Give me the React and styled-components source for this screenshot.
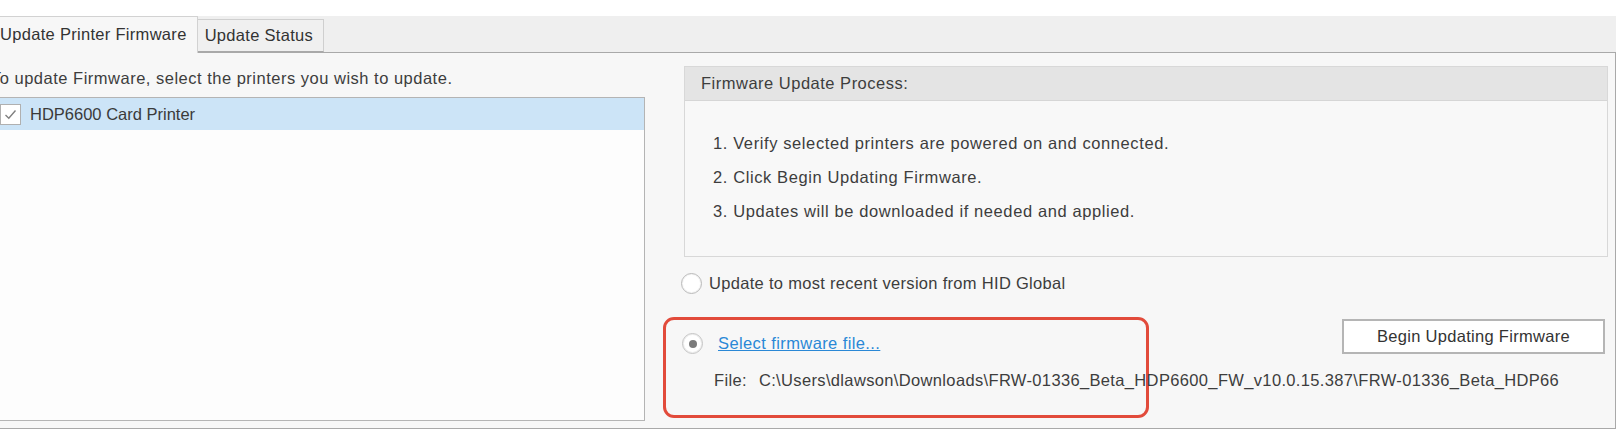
import React from 'react';
import styled, { createGlobalStyle } from 'styled-components';

const GlobalStyle = createGlobalStyle`
  html, body {
    margin: 0;
    padding: 0;
    background: #ffffff;
  }
  body {
    font-family: 'Liberation Sans', Arial, sans-serif;
  }
`;

const Root = styled.div`
  width: 1617px;
  height: 429px;
  overflow: hidden;
  display: flex;
  background: #ffffff;
`;

const Window = styled.div`
  flex: 0 0 1638px;
  margin-left: -22px;
  display: flex;
  flex-direction: column;
  padding-right: 1px;
  border-right: 2px solid #2b6fc6;
  background: #ffffff;
  font-size: 16.5px;
  letter-spacing: 0.4px;
  color: #3d3d3d;
`;

const TopGap = styled.div`
  height: 16px;
  background: #ffffff;
`;

const TabBar = styled.div`
  height: 36px;
  background: #efefef;
  display: flex;
  align-items: flex-end;
  padding-left: 14px;
  position: relative;
  z-index: 1;
`;

const Tab = styled.div`
  box-sizing: border-box;
  height: ${(p) => (p.$active ? '37px' : '33px')};
  margin-bottom: ${(p) => (p.$active ? '-1px' : '0')};
  padding: 0 ${(p) => (p.$active ? '10px 2px 7px' : '10px 0 7px')};
  display: flex;
  align-items: center;
  background: ${(p) => (p.$active ? '#f7f7f7' : '#f0f0f0')};
  border: 1px solid ${(p) => (p.$active ? '#d2d2d2' : '#cfcfcf')};
  border-bottom: ${(p) => (p.$active ? 'none' : '1px solid #a9a9a9')};
  border-left: ${(p) => (p.$active ? '1px solid #d2d2d2' : 'none')};
  color: #333333;
  letter-spacing: 0.3px;
  white-space: nowrap;
`;

const Content = styled.div`
  flex: 1;
  box-sizing: border-box;
  background: #f7f7f7;
  border: 1px solid #a9a9a9;
  display: grid;
  grid-template-columns: 655px 1fr;
  column-gap: 39px;
  padding: 13px 7px 7px 11px;
`;

const LeftColumn = styled.div`
  display: flex;
  flex-direction: column;
  min-height: 0;
`;

const Instructions = styled.div`
  height: 20px;
  line-height: 20px;
  margin: 2px 0 9px 1px;
  letter-spacing: 0.5px;
  white-space: nowrap;
`;

const PrinterList = styled.div`
  flex: 1;
  background: #fdfdfd;
  border: 1px solid #b4b4b4;
`;

const PrinterRow = styled.div`
  height: 32px;
  display: flex;
  align-items: center;
  gap: 9px;
  padding-left: 9px;
  background: ${(p) => (p.$selected ? '#cce4f7' : 'transparent')};
  color: #3a3a3a;
  letter-spacing: 0;
`;

const CheckBox = styled.span`
  box-sizing: border-box;
  width: 21px;
  height: 21px;
  background: #ffffff;
  border: 1px solid #b0b0b0;
  display: flex;
  align-items: center;
  justify-content: center;
`;

const RightColumn = styled.div`
  display: flex;
  flex-direction: column;
`;

const Panel = styled.div`
  border: 1px solid #d8d8d8;
  background: #f8f8f8;
`;

const PanelHeader = styled.div`
  height: 33px;
  line-height: 33px;
  background: #e4e4e4;
  border-bottom: 1px solid #d6d6d6;
  padding-left: 16px;
  letter-spacing: 0.5px;
  color: #3d3d3d;
`;

const StepList = styled.ol`
  margin: 0;
  padding: 25px 0 28px 28px;
  list-style: none;
`;

const Step = styled.li`
  height: 34px;
  line-height: 34px;
  letter-spacing: 0.6px;
  white-space: nowrap;
`;

const OptionRow = styled.label`
  display: flex;
  align-items: center;
  gap: ${(p) => p.$gap || '7px'};
  height: 21px;
  margin-top: ${(p) => p.$top || '0'};
  margin-left: ${(p) => p.$left || '0'};
  letter-spacing: 0.3px;
  white-space: nowrap;
`;

const Radio = styled.span`
  box-sizing: border-box;
  width: 21px;
  height: 21px;
  flex: 0 0 21px;
  border-radius: 50%;
  background: #ffffff;
  border: 1px solid ${(p) => (p.$checked ? '#c4c4c4' : '#b9b9b9')};
  box-shadow: inset 0 0 0 1px ${(p) => (p.$checked ? '#ececec' : '#f4f4f4')};
  display: flex;
  align-items: center;
  justify-content: center;

  &::after {
    content: '';
    width: 8px;
    height: 8px;
    border-radius: 50%;
    background: #7b7b7b;
    display: ${(p) => (p.$checked ? 'block' : 'none')};
  }
`;

const BottomRow = styled.div`
  display: flex;
  align-items: flex-start;
  margin-top: 23px;
`;

const Highlight = styled.div`
  box-sizing: border-box;
  width: 486px;
  height: 101px;
  margin-left: -21px;
  border: 3px solid #e24b3b;
  border-radius: 11px;
  padding: 13px 0 0 16px;
`;

const FileLink = styled.a`
  color: #2a88d6;
  text-decoration: underline;
  letter-spacing: 0.4px;
  cursor: pointer;
`;

const FileRow = styled.div`
  display: flex;
  gap: 12px;
  margin: 16px 0 0 32px;
  line-height: 20px;
  letter-spacing: 0.35px;
  white-space: nowrap;
  color: #3d3d3d;
`;

const ActionButton = styled.button`
  box-sizing: border-box;
  margin: 2px 3px 0 auto;
  width: 263px;
  height: 35px;
  background: #ffffff;
  border: 2px solid #b5b5b5;
  font-family: 'Liberation Sans', Arial, sans-serif;
  font-size: 16.5px;
  letter-spacing: 0.3px;
  color: #333333;
  cursor: pointer;
`;

function App() {
  const steps = [
    'Verify selected printers are powered on and connected.',
    'Click Begin Updating Firmware.',
    'Updates will be downloaded if needed and applied.',
  ];

  return (
    <>
      <GlobalStyle />
      <Root>
        <Window>
          <TopGap />
          <TabBar>
            <Tab $active>Update Printer Firmware</Tab>
            <Tab>Update Status</Tab>
          </TabBar>
          <Content>
            <LeftColumn>
              <Instructions>To update Firmware, select the printers you wish to update.</Instructions>
              <PrinterList>
                <PrinterRow $selected>
                  <CheckBox>
                    <svg width="13" height="11" viewBox="0 0 13 11">
                      <path d="M1.5 6 L4.8 9.2 L11.5 1.5" fill="none" stroke="#808080" strokeWidth="1.4" />
                    </svg>
                  </CheckBox>
                  HDP6600 Card Printer
                </PrinterRow>
              </PrinterList>
            </LeftColumn>
            <RightColumn>
              <Panel>
                <PanelHeader>Firmware Update Process:</PanelHeader>
                <StepList>
                  {steps.map((s, i) => (
                    <Step key={i}>{i + 1}. {s}</Step>
                  ))}
                </StepList>
              </Panel>
              <OptionRow $top="16px" $left="-3px">
                <Radio />
                Update to most recent version from HID Global
              </OptionRow>
              <BottomRow>
                <Highlight>
                  <OptionRow $gap="15px">
                    <Radio $checked />
                    <FileLink>Select firmware file...</FileLink>
                  </OptionRow>
                  <FileRow>
                    <span>File:</span>
                    <span>C:\Users\dlawson\Downloads\FRW-01336_Beta_HDP6600_FW_v10.0.15.387\FRW-01336_Beta_HDP66</span>
                  </FileRow>
                </Highlight>
                <ActionButton>Begin Updating Firmware</ActionButton>
              </BottomRow>
            </RightColumn>
          </Content>
        </Window>
      </Root>
    </>
  );
}

export default App;
